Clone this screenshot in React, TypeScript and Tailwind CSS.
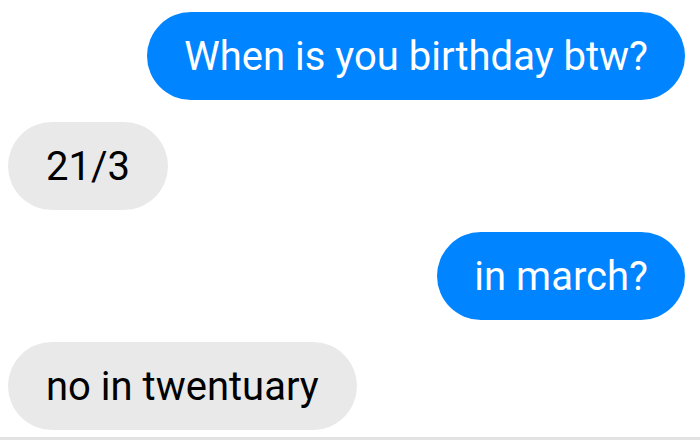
import React from "react";

export default function App() {
  const font = { fontFamily: "Roboto, 'Noto Sans', sans-serif" };
  return (
    <div className="w-[700px] h-[440px] bg-white overflow-hidden flex flex-col" style={font}>
      <div className="flex flex-col gap-[22px] pt-[12px] px-[8px] pr-[15px] flex-1">
        <div className="flex justify-end">
          <div className="h-[88px] rounded-full bg-[#0084ff] text-white text-[40px] px-[37px] pt-[2px] flex items-center leading-none">
            When is you birthday btw?
          </div>
        </div>
        <div className="flex justify-start">
          <div className="h-[88px] rounded-full bg-[#e9e9e9] text-black text-[40px] px-[38px] pt-[2px] flex items-center leading-none">
            21/3
          </div>
        </div>
        <div className="flex justify-end">
          <div className="h-[88px] rounded-full bg-[#0084ff] text-white text-[40px] px-[37px] pt-[2px] flex items-center leading-none">
            in march?
          </div>
        </div>
        <div className="flex justify-start">
          <div className="h-[88px] rounded-full bg-[#e9e9e9] text-black text-[40px] px-[38px] pt-[2px] flex items-center leading-none">
            no in twentuary
          </div>
        </div>
      </div>
      <div className="h-[3px] bg-[#e2e2e2]" />
    </div>
  );
}
